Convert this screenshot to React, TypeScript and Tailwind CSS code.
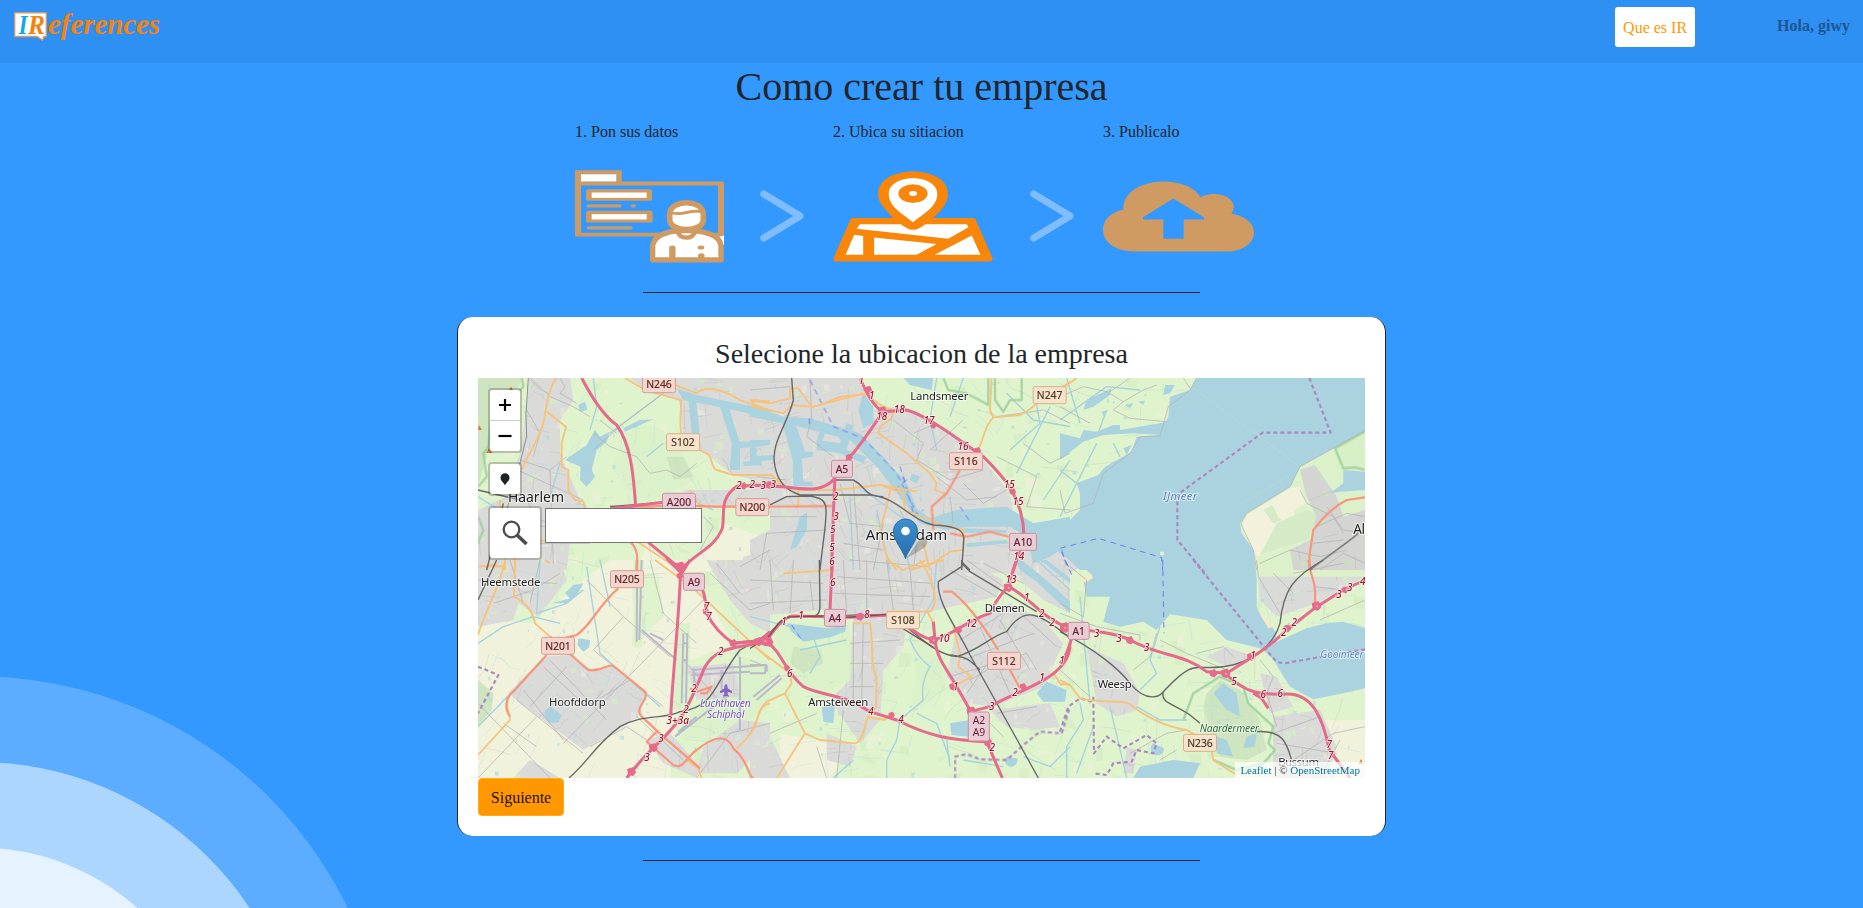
import React from "react";

type Origin = [number, number];

/* Every map sheet is drawn at three units per pixel from its own origin. */
const NW: Origin = [450, 310];
const N: Origin = [750, 310];
const NE: Origin = [1060, 310];
const SW: Origin = [450, 560];
const S: Origin = [750, 560];
const SE: Origin = [1060, 560];

type Line = [Origin, string];

const at = (o: Origin) => `translate(${o[0]} ${o[1]}) scale(0.33333)`;

const farmland: Line[] = [
  [SW, "M84,180 L250,190 400,60 480,0 560,0 545,260 640,170 620,0 700,0 690,40 770,110 850,250 700,310 660,654 84,654Z"],
  [NW, "M590,700 L680,770 800,700 820,640 960,690 960,730 870,780 560,790Z"],
  [S, "M0,560 L90,590 90,520 300,560 240,654 0,654Z"],
  [SE, "M700,480 L915,480 915,654 830,654Z"],
];

const green: Line[] = [
  [SW, "M690,190 L720,190 720,440 670,450Z"],
  [SW, "M550,0 L582,0 576,262 552,262Z"],
  [SW, "M870,290 L960,310 960,440 830,520 700,540 720,460Z"],
  [S, "M470,180 L550,260 600,380 530,430 480,460 500,340Z"],
  [S, "M60,190 L300,190 300,370 200,400 110,320Z"],
  [NW, "M480,470 L560,340 640,360 700,440 740,510 630,560 560,570Z"],
];

const woods: Line[] = [
  [NW, "M84,204 L215,204 198,250 140,310 120,370 115,420 90,510 84,520Z"],
  [SE, "M430,440 L440,400 480,360 540,390 600,480 620,570 560,600 480,590 460,540Z"],
  [SE, "M610,30 L700,0 740,60 650,160Z"],
  [S, "M130,260 L210,270 220,310 160,340 120,310Z"],
  [NW, "M650,440 L700,440 730,500 670,510Z"],
  [SW, "M84,360 L130,400 125,450 84,500Z"],
];

const urban: Line[] = [
  [NW, "M235,204 L360,204 370,270 330,330 330,430 360,500 395,580 470,640 460,700 360,700 350,780 84,780 84,600 170,560 210,430 228,300Z"],
  [NW, "M540,204 L960,204 960,520 850,495 780,440 700,390 690,270 600,250Z"],
  [NW, "M700,540 L960,540 960,590 760,590Z"],
  [NW, "M880,740 L960,720 960,780 870,780Z"],
  [SW, "M84,0 L330,0 350,60 265,170 205,130 190,180 84,200Z"],
  [SW, "M175,400 L280,290 360,285 430,332 490,316 590,405 565,470 510,505 400,570 240,450Z"],
  [SW, "M770,0 L960,0 960,220 900,190 840,120Z"],
  [SW, "M590,540 L660,520 750,620 740,654 640,610Z"],
  [SW, "M760,560 L870,480 960,490 960,540 860,640 740,640Z"],
  [SW, "M190,654 L240,600 330,654Z"],
  [SW, "M710,320 L850,310 870,410 740,420Z"],
  [N, "M0,204 L330,204 370,300 440,290 530,330 640,400 700,450 780,550 800,680 780,780 0,780 0,690 60,660 60,600 0,560Z"],
  [S, "M0,0 L650,0 760,60 740,110 560,150 480,180 550,190 400,180 220,150 0,170Z"],
  [S, "M620,200 L780,130 880,180 940,250 880,380 730,440 650,430 590,350Z"],
  [S, "M310,160 L470,190 460,260 400,330 390,480 330,550 240,420 300,360Z"],
  [S, "M0,580 L70,550 120,654 0,654Z"],
  [S, "M230,520 L320,560 300,620 230,600Z"],
  [S, "M720,450 L900,430 930,500 850,510 770,500Z"],
  [S, "M750,10 L960,0 960,160 880,120Z"],
  [N, "M640,660 L900,690 1010,760 960,790 640,790Z"],
  [SE, "M80,260 L190,310 240,400 230,450 170,470 110,430Z"],
  [SE, "M640,470 L780,450 830,560 800,654 640,654Z"],
  [SE, "M590,10 L700,0 915,0 915,50 770,130 650,170 600,120Z"],
  [SE, "M440,290 L500,260 580,290 500,320Z"],
  [SE, "M600,340 L650,350 700,440 630,460Z"],
  [SE, "M200,560 L230,570 220,640 190,640Z"],
];

const water: Line[] = [
  [NW, "M345,450 L410,405 435,360 450,380 480,365 470,395 440,420 425,480 435,500 410,530 390,510 392,470Z"],
  [NW, "M385,285 L405,275 412,300 390,305Z"],
  [NW, "M680,235 L740,255 960,300 960,325 840,298 700,270Z"],
  [NW, "M715,265 L738,270 750,375 725,370Z"],
  [NW, "M810,290 L838,296 868,395 930,393 935,408 870,415 870,480 840,480 845,400Z"],
  [NW, "M880,455 L935,452 935,466 880,468Z"],
  [NW, "M520,355 L570,330 610,328 570,345 525,365Z"],
  [N, "M0,285 L100,320 180,325 330,370 400,440 470,520 500,595 540,625 620,600 770,590 850,640 960,620 960,700 900,740 850,760 840,720 860,700 780,650 650,650 590,660 510,640 450,560 380,470 300,390 150,350 0,320Z"],
  [N, "M95,330 L140,350 165,425 190,425 188,440 155,445 160,515 188,515 188,528 130,528 128,450Z"],
  [N, "M200,390 L270,400 290,340 310,345 290,420 350,440 340,460 270,430 200,420Z M215,345 L232,348 215,400 200,398Z M250,350 L262,352 290,400 282,410Z"],
  [N, "M340,250 L370,290 370,340 340,355 325,300Z"],
  [N, "M0,390 L60,390 60,405 0,410Z M0,440 L70,435 70,450 0,455Z M0,412 L20,412 20,440 0,440Z"],
  [N, "M485,490 L510,500 500,520 480,510Z M640,655 L770,660 770,668 640,668Z M650,700 L770,690 775,700 650,712Z"],
  [N, "M460,204 L550,204 545,240 480,225Z"],
  [N, "M150,620 L172,605 170,660 140,710 120,720 135,670Z"],
  [NE, "M410,204 L915,204 915,780 60,780 -40,690 -60,660 20,640 60,600 60,550 50,520 115,495 135,470 215,425 230,380 300,375 325,320 330,260 390,240Z"],
  [NE, "M0,370 L60,385 70,360 110,365 160,345 180,345 180,360 300,340 320,335 300,375 220,370 130,375 70,395 0,450Z"],
  [NE, "M80,270 L155,235 150,255 100,290 70,300Z M195,285 L220,280 210,295Z M315,225 L345,225 330,250 310,255Z"],
  [NE, "M125,305 L145,300 130,318Z M235,275 L255,272 250,285Z M190,415 L215,405 200,435Z"],
  [S, "M110,190 L230,205 290,195 285,215 240,232 160,245 125,215Z"],
  [S, "M600,490 L660,480 655,530 605,525Z"],
  [S, "M215,440 L255,435 250,490 220,485Z"],
  [S, "M860,400 L890,365 950,390 945,425 880,425Z"],
  [S, "M770,590 A18,18 0 1 0 800,595Z"],
  [S, "M795,0 L815,0 900,70 960,125 960,160 860,65 810,30Z M870,0 L890,0 960,55 960,70Z"],
  [SE, "M60,-10 L590,-10 590,140 650,220 640,290 600,265 500,240 440,180 330,163 290,210 250,185 180,200 130,185 150,110 80,110 70,60 95,45 40,-10Z"],
  [SE, "M640,250 L740,205 800,190 850,185 915,205 915,385 850,400 760,418 690,380 640,300 610,270Z"],
  [SE, "M460,400 L490,370 530,400 540,470 500,450Z M560,530 L590,520 585,560 550,565Z M470,530 L500,540 520,590 470,580Z"],
  [SE, "M280,550 A20,20 0 1 0 312,565Z M240,620 L340,600 420,610 400,654 220,654Z"],
  [SW, "M285,450 L300,440 335,465 325,488 300,488 284,470Z M385,235 L420,240 418,262 400,275 382,255Z"],
  [SW, "M305,130 L360,115 345,100 370,75 400,70 385,100 350,130Z"],
];

const polder: Line[] = [
  [NE, "M915,362 L720,470 690,530 560,610 540,640 545,670 580,720 590,800 915,800Z"],
];

const polderFields: Line[] = [
  [NE, "M690,535 L560,615 545,650 590,740 740,690 700,600 740,580 720,530Z"],
];

const polderTown: Line[] = [
  [NE, "M720,480 L765,465 830,560 850,620 915,600 915,780 700,780 690,720 750,690 770,620 740,560Z"],
];

const nature: Line[] = [
  [NE, "M915,365 L825,415 850,475 880,470 915,480Z"],
];

const minor: Line[] = [
  [NW, "M240,204 L300,260 370,290 420,320 M330,204 L345,230 330,250 380,280 M430,370 L480,410 560,440 600,490 650,480 690,500 740,460"],
  [NW, "M210,450 L300,480 350,440 M180,470 L290,520 400,570 M230,560 L250,620 340,660 M120,640 L300,650 430,690 M300,480 L310,760 M230,300 L270,370 250,440 M150,700 L420,700"],
  [NW, "M450,330 L500,370 M430,420 L520,340 640,250 M760,620 L790,650 750,720 M870,770 L960,720"],
  [SW, "M84,60 L320,70 M130,130 L250,90 330,40 M180,0 L220,130 M270,0 L240,130 M84,654 L260,470 M84,430 L300,654 M160,490 L260,560 M200,420 L400,580 M280,320 L410,440 540,360 M220,390 L340,540 M300,300 L470,480 M350,320 L240,440"],
  [SW, "M770,110 L340,550 M430,270 L640,440 M520,170 L660,290 M410,60 L520,170 430,270 M600,0 L640,160 740,250 M460,390 L430,430 M780,40 L900,150 960,130 M800,10 L870,100 M700,300 L850,470 M420,560 L530,500 590,540 M560,470 L700,600 M740,654 L840,520 960,490"],
  [N, "M0,240 L120,230 M180,204 L185,330 170,380 250,440 M20,500 L110,510 M60,620 L200,620 M30,780 L50,670 230,660 M270,520 L300,640 400,650 M280,700 L400,720 M310,520 L330,780 M400,640 L370,780 M450,600 L500,700 490,780"],
  [N, "M430,330 L520,400 500,450 600,510 700,480 M540,420 L640,330 M560,500 L650,570 740,560 M600,560 L610,640 M490,370 L560,340 M640,520 L700,580 770,540 M820,400 L900,460 960,430 M740,440 L860,500 830,590 960,600 M740,320 L880,300 960,340"],
  [S, "M0,60 L220,70 M0,130 L230,120 M60,0 L70,150 M130,0 L120,160 M180,60 L190,150 M260,50 L400,60 550,70 M280,0 L290,160 M350,0 L350,160 M410,0 L430,150 M480,20 L490,150 M250,100 L540,110 M300,0 L540,20 M310,190 L310,440 M340,190 L335,420 M300,250 L450,240 M300,310 L400,310 M300,380 L370,380"],
  [S, "M630,240 L760,160 M640,300 L850,220 M660,360 L780,290 M600,350 L830,280 860,330 M650,400 L720,300 M690,200 L780,400 M750,180 L840,330 M800,150 L920,260 M820,70 L700,10 M600,30 L740,110 M650,0 L760,80 M200,560 L230,654 M0,300 L50,320 M60,520 L200,460 M280,450 L260,654 M700,470 L760,530 M740,460 L860,440"],
  [NE, "M0,260 L70,230 140,245 190,275 250,240 290,225 M150,245 L210,204 M0,290 L90,340 M190,275 L160,300 210,325 320,335 M0,540 L15,610 100,580 130,490 210,430 240,380 300,378 325,290 390,240 410,204 M370,204 L390,235"],
  [NE, "M915,362 L720,470 690,530 560,610 542,640 580,720 590,780 M720,540 L740,580 820,620 850,670 M600,760 L690,720 780,740 860,720 M770,650 L860,610 915,620 M760,700 L850,690 M780,780 L850,730 915,760 M800,590 L850,660 915,670"],
  [SE, "M0,130 L70,170 80,60 30,20 M0,160 L110,200 240,225 240,240 M290,220 L270,290 220,330 M300,240 L380,280 500,330 M410,280 L490,260 520,290 M590,0 L595,50 660,160 M700,40 L850,10 M760,80 L850,90 M640,40 L700,100 M780,180 L915,120 M600,300 L640,350 620,400 650,500 M640,520 L780,470 M700,600 L820,520 915,500 M650,550 L830,580 M780,654 L840,540 M0,330 L90,410 M210,580 L320,520 380,510 M300,600 L350,570"],
];

const dike: Line[] = [
  [NW, "M235,204 L228,310 230,380 205,480 170,600 130,700"],
];

const ditches: Line[] = [
  [NW, "M430,204 L440,290 420,360 M400,580 L410,640 M480,370 L560,310 640,250 M300,560 L330,460 M84,560 L180,620 M590,440 L640,400 M700,560 L790,600"],
  [SW, "M270,0 L260,160 350,130 400,90 M410,20 L450,280 630,440 M450,0 L480,140 M84,250 L160,200 250,170 330,190 M280,300 L84,500"],
  [S, "M560,0 L550,120 480,240 Q500,290 540,320 Q510,370 520,420 L450,480 440,540 410,600 410,654 M600,620 L590,540 M250,654 L310,600 M150,270 L290,240 M180,340 L210,290 190,230 M640,600 L760,620 M0,170 L120,200"],
  [S, "M960,560 L900,620 820,590 M500,460 L560,490 600,600 M860,0 L960,90"],
  [SE, "M60,110 L90,430 M240,390 L290,340 270,300 300,200 M60,430 L70,480 20,560 20,654 M230,440 L300,480 380,480 M100,500 L50,640 M150,440 L200,654"],
  [N, "M560,204 L540,330 560,420 M850,230 L870,340 780,420 M640,204 L600,320 M900,290 L800,490 M960,450 L880,570 M300,560 L310,780 M380,600 L420,780 M340,540 L480,640 M450,640 L480,780 M770,250 L850,330 960,350"],
  [NE, "M0,620 L80,460 110,400 M20,204 L60,340 M110,380 L140,300 M0,330 L140,230 240,240 M120,570 L70,680 M0,480 L100,560 M160,400 L180,440"],
];

const secondary: Line[] = [
  [NW, "M320,204 C295,230 290,290 285,310 C280,370 240,420 215,480 M290,305 L348,350 335,400 335,470 355,480 355,540 375,570 400,575 410,600 M150,570 L150,640 120,740 M84,770 L130,765 165,770 M270,692 L350,690 M195,745 L195,780 M165,745 L165,780"],
  [NW, "M525,204 L560,225 C600,250 640,255 690,270 C700,300 680,330 700,400 L770,430 C790,440 780,470 800,480 L850,495 960,495 M650,215 L740,250 C770,220 830,245 870,270 L960,300 M905,270 L910,290 960,300 M720,540 L750,590 860,590 M540,680 L690,780 M910,270 L960,275"],
  [SW, "M165,0 C155,70 110,140 84,225 M195,0 L192,110 C230,130 250,160 255,190 L300,230 M100,20 L160,20 M285,0 L300,10 M180,400 C160,440 180,460 180,480 L84,585 M615,0 L730,85 960,300 M960,430 C910,440 940,500 860,565 M710,600 L745,625 755,654"],
  [N, "M0,270 L60,280 120,265 120,235 145,235 185,290 C230,290 240,250 350,255 L400,290 430,300 425,325 390,350 385,370 470,430 540,490 560,520 555,540 590,552 M10,270 L10,290 100,310 125,285 180,290 M190,290 L340,250"],
  [N, "M0,495 L65,495 100,530 145,540 255,540 390,525 500,545 M145,540 L145,590 M725,204 L720,300 730,322 C700,350 700,400 680,425 M730,322 L810,315 C850,300 850,280 880,270 L960,215 M420,540 C410,600 395,640 390,660 L410,740 440,780 M390,525 L460,550 465,600 560,640 640,660 640,720 600,725 540,765 M520,700 L540,780"],
  [S, "M100,40 L250,30 240,0 M310,190 L360,190 C370,230 360,330 380,350 L378,440 350,480 C340,520 330,550 315,550 L210,540 165,520 80,654 M165,520 L105,400 M0,525 C30,480 20,450 50,425 L105,400 125,370 M0,250 L120,340 125,370 M410,155 L540,155 C570,130 550,60 510,0 M610,200 L630,280 625,320 665,350 610,380 M350,470 L405,480 420,460 M480,30 L580,0 M410,0 L460,30 530,0 M530,150 L550,190 M910,340 L930,370 960,375"],
  [SE, "M0,360 L30,375 60,415 C120,430 170,420 205,430 C270,480 320,500 380,510 L450,550 460,600 530,645 M0,375 L20,370"],
  [NE, "M0,240 L50,204"],
];

const primary: Line[] = [
  [NW, "M480,590 L600,590 680,585 790,590 960,590 M540,695 C570,720 560,760 560,780"],
  [SW, "M560,0 L560,30 M505,85 C450,130 420,200 380,225 L300,245 M300,230 L415,330 C460,335 470,310 490,318 L585,395 C600,420 550,440 575,470 L640,530 750,625 M290,285 L190,395 C170,410 160,440 180,470 M620,515 L590,545 670,615 C700,630 710,590 740,570 C790,530 830,520 850,565 C880,590 890,620 905,654 M720,385 L740,395 785,380 770,400 750,400"],
  [N, "M0,590 L250,588 M630,480 L590,550 545,590 550,660 M600,670 L650,680 720,665 775,680"],
  [S, "M580,95 L605,95 C640,120 680,170 720,230 L745,270 M780,330 L810,385 M0,648 L10,654"],
  [NE, "M915,562 L860,570 C820,590 790,620 760,660 L748,740 750,780"],
  [SE, "M745,0 C750,50 770,60 765,130"],
];

const motorway: Line[] = [
  [NW, "M395,204 Q450,310 500,345 C540,400 550,480 557,590 M480,597 L640,577 M960,525 L862,528 C800,570 830,620 815,660 C790,715 750,720 690,780 M595,697 L690,775"],
  [SW, "M650,-5 L695,40 720,0 M692,35 C685,200 668,350 662,470 M735,50 C775,100 765,150 770,160 C790,200 820,230 850,250 L960,240 M960,215 L920,250 C860,265 800,260 765,320 C740,380 720,430 700,460 C650,540 600,560 530,654"],
  [N, "M330,204 C350,250 370,290 400,305 L470,300 C540,320 640,400 700,440 C760,500 820,560 822,680 L790,780 M400,305 C360,360 330,410 295,445 L255,500 C250,600 247,700 245,780 M255,505 C220,545 180,540 100,530 L0,525"],
  [S, "M247,0 L240,150 M-50,250 L50,240 C80,200 100,170 130,168 L300,172 420,165 C470,190 500,230 550,240 M550,185 L555,240 C560,300 600,340 620,380 L660,450 M550,240 C620,220 650,180 720,160 C740,110 770,90 775,75 L800,0 M775,80 C840,110 880,180 960,205 M45,240 C100,280 100,330 160,380 C220,410 280,400 360,455 L440,480 C540,530 600,540 710,545 L757,654 M660,455 L720,440 C800,390 950,360 960,260"],
  [SE, "M0,205 C100,210 170,220 210,240 C300,290 370,280 440,335 L500,340 C560,300 620,270 680,210 L770,140 850,90 915,60 M500,345 C560,400 600,405 680,402 C760,400 790,480 808,570 L870,654 M580,400 L605,415 625,445 M0,310 C20,290 30,260 40,210"],
];

const junctions: [Origin, number, number, number][] = [
  [SW, 692, 20, 14], [SW, 690, 48, 9], [SW, 850, 250, 11], [SW, 925, 245, 12], [SW, 610, 563, 12], [SW, 545, 635, 12], [SW, 955, 245, 14], [SW, 768, 155, 9],
  [N, 398, 303, 13], [N, 355, 240, 11], [N, 550, 347, 8], [N, 298, 442, 9], [N, 683, 422, 9], [N, 788, 545, 9], [N, 60, 525, 10],
  [S, 550, 240, 13], [S, 775, 82, 13], [S, 45, 243, 15], [S, 610, 380, 11], [S, 330, 170, 11], [S, 665, 455, 14], [S, 820, 380, 9], [S, 715, 548, 12], [S, 112, 325, 8], [S, 625, 210, 10], [S, 425, 465, 8], [S, 945, 200, 12],
  [SE, 770, 138, 13], [SE, 855, 90, 9], [SE, 682, 205, 10], [SE, 210, 241, 11], [SE, 460, 340, 11], [SE, 497, 340, 13], [SE, 573, 290, 11], [SE, 610, 405, 8], [SE, 15, 203, 14],
  [NW, 880, 528, 10], [NW, 955, 525, 10], [NW, 690, 772, 12],
];

const rail: Line[] = [
  [SW, "M140,0 L84,120 M357,654 C420,600 430,560 510,500 C580,460 640,480 690,455 C800,440 790,370 870,270 L960,220"],
  [NW, "M84,540 L210,570 M480,590 L700,572 M160,580 L110,780"],
  [N, "M125,204 L130,270 C110,350 60,400 75,470 C85,520 110,540 150,555 L360,555 C440,560 480,630 550,645 C660,650 640,680 640,710 L635,780 M255,510 L310,510 C350,530 340,560 400,560 M60,585 L110,560 180,558 C250,570 230,590 210,780 M635,755 L660,780"],
  [S, "M208,0 L210,140 C208,165 200,167 190,168 L130,170 M0,265 C80,220 80,170 130,170 L410,163 C500,210 540,280 620,290 C690,270 720,230 770,215 C820,140 860,150 960,235 M635,0 L635,20 565,65 C560,130 620,200 660,285 L865,654 M635,10 L660,35 860,155 M600,285 C650,290 660,300 690,330"],
  [SE, "M0,215 C110,270 180,330 210,370 C260,430 300,410 310,395 C380,320 400,320 430,322 C560,330 640,260 660,190 C670,90 700,50 790,0 M310,395 C300,430 340,430 390,465 L420,490 M590,515 C670,510 680,550 695,600"],
  [NE, "M750,780 C800,740 860,700 895,670"],
];

const runways: Line[] = [
  [SW, "M575,0 L568,240 M562,0 L560,245 M575,210 L680,300 M600,220 L640,240 M700,220 L695,430 M712,220 L708,430 M700,250 L712,250 M698,300 L710,300 M725,330 L950,315 M725,345 L900,335 M870,290 L870,510 M675,530 L830,410 M685,515 L740,470 M730,325 L735,380 M950,315 L950,335 M815,330 L815,400"],
  [S, "M0,315 L48,315 45,340 0,340 M10,410 L90,345 M20,420 L95,355"],
];

const borders: Line[] = [
  [NE, "M748,204 L812,368 608,368 365,545 352,560 352,690 440,795"],
  [SE, "M400,0 L620,270 C650,310 660,315 700,305 L915,268"],
  [SE, "M100,410 L102,580 140,530 190,565 260,525 290,550 280,580 230,570 215,605 160,610 140,645 100,640 M0,515 L25,440 60,415 100,425"],
  [S, "M615,654 L615,590 650,582 690,598 770,600 820,555 870,515 935,520 960,440"],
  [SW, "M84,320 L145,345 84,460"],
];

const ferries: Line[] = [
  [N, "M180,210 L250,350 340,385 440,490 500,610 M178,325 L178,350 M450,470 L465,520 M435,540 L480,500 M460,500 L490,610 M630,590 L660,635 M490,620 L520,600 M935,720 L950,770"],
  [NE, "M25,770 L0,715 115,685 305,743 308,780"],
  [SE, "M308,0 L312,220 M15,0 L40,55"],
  [S, "M125,195 L155,240"],
];

const hedges: Line[] = [
  [N, "M580,204 L595,240 650,250 715,285 715,204 M735,204 L735,270 760,305 780,270 815,270 815,204"],
  [NE, "M915,365 L825,415 850,475 885,472 915,480"],
  [SE, "M370,480 L400,400 480,350 550,380 565,430 640,500 625,550 645,570 610,610 530,630 460,600"],
  [NW, "M215,204 L220,230 180,270 125,330 115,410 100,430 110,500 84,530 M84,620 L100,660 84,700"],
];

const shieldTone = {
  a: "fill-[#e9cdd5] stroke-[#cf8ba0]",
  n: "fill-[#f2d6cf] stroke-[#d99d8c]",
  s: "fill-[#f5e3cf] stroke-[#d8b184]",
};
const shieldInk = {
  a: "fill-[#681c35] stroke-[#681c35]",
  n: "fill-[#66281e] stroke-[#66281e]",
  s: "fill-[#523a1c] stroke-[#523a1c]",
};

const shields: [Origin, number, number, string, "a" | "n" | "s"][] = [
  [NW, 627, 223, "N246", "n"], [NW, 699, 397, "S102", "s"], [NW, 687, 576, "A200", "a"], [NW, 907, 592, "N200", "n"],
  [SW, 531, 58, "N205", "n"], [SW, 732, 66, "A9", "a"], [SW, 324, 258, "N201", "n"],
  [N, 276, 477, "A5", "a"], [N, 648, 454, "S116", "n"], [N, 899, 256, "N247", "s"], [N, 819, 696, "A10", "a"],
  [S, 255, 174, "A4", "a"], [S, 459, 181, "S108", "s"], [S, 762, 303, "S112", "n"],
  [SE, 56, 213, "A1", "a"], [SE, 420, 549, "N236", "s"],
];

const places: [Origin, number, number, string, number, number][] = [
  [NW, 174, 577, "Haarlem", 168, 42], [SW, 93, 79, "Heemstede", 178, 34], [SW, 297, 438, "Hoofddorp", 170, 34],
  [N, 481, 270, "Landsmeer", 174, 34], [N, 347, 690, "Amsterdam", 245, 45],
  [S, 704, 155, "Diemen", 120, 34], [S, 175, 438, "Amstelveen", 180, 34],
  [SE, 113, 384, "Weesp", 102, 34], [SE, 655, 618, "Bussum", 122, 34], [NE, 880, 671, "Almere", 130, 41],
];

const exits: [Origin, number, number, string][] = [
  [NW, 867, 538, "2"], [NW, 907, 535, "2"], [NW, 940, 538, "3"],
  [SW, 770, 150, "7"], [SW, 777, 181, "7"], [SW, 812, 284, "2"], [SW, 732, 395, "2"], [SW, 708, 460, "2"], [SW, 683, 492, "3+3a"], [SW, 633, 545, "3"], [SW, 591, 602, "3"],
  [N, 70, 535, "3"], [N, 334, 223, "1"], [N, 365, 268, "1"], [N, 395, 329, "18"], [N, 448, 308, "18"], [N, 537, 343, "17"], [N, 639, 419, "16"], [N, 778, 535, "15"], [N, 804, 584, "15"], [N, 257, 569, "2"], [N, 258, 631, "3"], [N, 248, 670, "5"], [N, 246, 722, "5"], [N, 246, 764, "6"], [N, 806, 751, "14"],
  [S, 248, 79, "6"], [S, 153, 177, "1"], [S, 102, 194, "1"], [S, 350, 175, "8"], [S, 582, 246, "10"], [S, 664, 201, "12"], [S, 783, 68, "13"], [S, 830, 124, "1"], [S, 875, 171, "2"], [S, 907, 198, "2"], [S, 119, 350, "6"], [S, 363, 466, "4"], [S, 453, 489, "4"], [S, 617, 389, "1"], [S, 725, 449, "3"], [S, 795, 408, "2"], [S, 876, 362, "1"], [S, 936, 313, "1"], [S, 727, 572, "2"],
  [SE, 110, 230, "3"], [SE, 177, 246, "3"], [SE, 260, 273, "3"], [SE, 579, 298, "1"], [SE, 671, 227, "2"], [SE, 703, 197, "2"], [SE, 837, 114, "3"], [SE, 869, 93, "3"], [SE, 908, 76, "4"], [SE, 522, 376, "5"], [SE, 610, 414, "6"], [SE, 661, 411, "6"], [SE, 808, 563, "7"], [SE, 812, 597, "7"],
];

/* Small seeded generator so the street texture is stable between renders. */
function seeded(seed: number) {
  let s = seed;
  return () => {
    s = (s * 16807) % 2147483647;
    return s / 2147483647;
  };
}

function scatter(seed: number, count: number, min: number, max: number) {
  const r = seeded(seed);
  let d = "";
  for (let i = 0; i < count; i++) {
    const x = 478 + r() * 887;
    const y = 378 + r() * 400;
    const w = min + r() * (max - min);
    const h = min + r() * (max - min);
    const k = (r() - 0.5) * w;
    d += `M${x.toFixed(1)},${y.toFixed(1)}l${w.toFixed(1)},${(k * 0.6).toFixed(1)} ${(k * 0.5).toFixed(1)},${h.toFixed(1)} ${(-w).toFixed(1)},${(-k * 0.4).toFixed(1)}Z`;
  }
  return d;
}

/* Polylines that follow a slowly varying local grid direction. */
function strands(seed: number, count: number, len: number, wobble: number) {
  const r = seeded(seed);
  let d = "";
  for (let i = 0; i < count; i++) {
    let x = 478 + r() * 887;
    let y = 378 + r() * 400;
    const tilt = Math.sin(x / 70) * 0.4 + Math.cos(y / 55) * 0.35;
    let a = tilt + (r() > 0.5 ? 0 : Math.PI / 2);
    d += `M${x.toFixed(1)},${y.toFixed(1)}`;
    for (let j = 0; j < 3; j++) {
      x += Math.cos(a) * len * (0.4 + r());
      y += Math.sin(a) * len * (0.4 + r());
      a += (r() - 0.5) * wobble;
      d += `L${x.toFixed(1)},${y.toFixed(1)}`;
    }
  }
  return d;
}

function Layer({ items, className, width, dash }: { items: Line[]; className: string; width?: number; dash?: string }) {
  return (
    <g className={className} strokeWidth={width} strokeDasharray={dash} strokeLinejoin="round">
      {items.map(([o, d], i) => (
        <path key={i} d={d} transform={at(o)} />
      ))}
    </g>
  );
}

function CityMap() {
  return (
    <svg viewBox="478 378 887 400" className="block h-full w-full font-['Noto_Sans',sans-serif]">
      <defs>
        <clipPath id="town">
          {urban.map(([o, d], i) => (
            <path key={i} d={d} transform={at(o)} />
          ))}
        </clipPath>
        <clipPath id="newtown">
          {polderTown.map(([o, d], i) => (
            <path key={i} d={d} transform={at(o)} />
          ))}
        </clipPath>
        <linearGradient id="pin" x1="0" y1="0" x2="0" y2="1">
          <stop offset="0" stopColor="#3d8fd0" />
          <stop offset="1" stopColor="#256fae" />
        </linearGradient>
      </defs>
      <rect x="478" y="378" width="887" height="400" className="fill-[#dff3cc]" />
      <path d={scatter(77, 200, 3, 14)} className="fill-[#d8efc5]" />
      <path d={scatter(41, 150, 3, 12)} className="fill-[#e9f1d6]" />
      <Layer items={farmland} className="fill-[#f1f2dc]" />
      <Layer items={green} className="fill-[#daf1c9]" />
      <Layer items={woods} className="fill-[#cee5bf]" />
      <path d={strands(9, 520, 8, 0.25)} className="fill-none stroke-[#aed9df] opacity-60" strokeWidth="0.5" />
      <path d={scatter(19, 260, 1, 4)} className="fill-[#b3dadb] opacity-70" />
      <path d={strands(83, 90, 12, 0.3)} className="fill-none stroke-[#c6c3c4] opacity-70" strokeWidth="0.5" />
      <Layer items={urban} className="fill-[#dadad8]" />
      <g clipPath="url(#town)">
        <path d={scatter(31, 620, 2, 8)} className="fill-[#d6ebc8] opacity-70" />
        <path d={scatter(53, 240, 2, 8)} className="fill-[#ebe5e1] opacity-70" />
        <path d={scatter(15, 200, 1, 4)} className="fill-[#b4d7dc] opacity-70" />
        <path d={strands(47, 260, 7, 0.2)} className="fill-none stroke-[#b4d9e2]" strokeWidth="0.5" />
        <path d={strands(21, 720, 7, 0.2)} className="fill-none stroke-[#c0c0c0]" strokeWidth="0.5" />
      </g>
      <Layer items={ditches} className="fill-none stroke-[#a5d2df]" width={4} />
      <Layer items={water} className="fill-[#aad3df]" />
      <Layer items={polder} className="fill-[#dcf0c9]" />
      <Layer items={polderFields} className="fill-[#f2f1dc]" />
      <path transform={at(NE)} d="M610,600 L635,585 665,630 640,640Z M600,735 L740,690 770,650 780,620 740,600 650,640Z" className="fill-[#d5eac6]" />
      <path transform={at(NE)} d="M640,580 L710,540 735,580 655,625Z" className="fill-[#f2f1dc]" />
      <Layer items={polderTown} className="fill-[#d4d4d2]" />
      <g clipPath="url(#newtown)">
        <path d={scatter(61, 700, 2, 7)} className="fill-[#c9e4b6] opacity-70" />
        <path d={strands(29, 260, 8, 0.4)} className="fill-none stroke-[#bdbdbd]" strokeWidth="0.5" />
      </g>
      <path transform={at(NE)} d="M850,480 L915,485 915,540 840,545 810,550 850,520Z" className="fill-[#aad3df]" />
      <Layer items={nature} className="fill-[#d8f0c6]" />
      <path transform={at(NE)} d="M400,235 L720,470 M535,587 L700,490 M10,718 L62,712" className="fill-none stroke-[#bcd9cf]" strokeWidth="2" />
      <path transform={at(SE)} d="M60,55 L95,42 98,55 75,68Z M590,140 L640,200 625,205 598,160Z" className="fill-[#f5e9c6]" />
      <circle cx="1162" cy="553.500" r="2" className="fill-[#eeefcf]" />
      <Layer items={hedges} className="fill-none stroke-[#98cd98] opacity-80" width={7} />
      <Layer items={minor} className="fill-none stroke-[#b4b1b4]" width={2.2} />
      <Layer items={dike} className="fill-none stroke-[#909090]" width={3} />
      <Layer items={runways} className="fill-none stroke-[#bbb8cb]" width={6} />
      <Layer items={borders} className="fill-none stroke-[#ab88c0]" width={6.5} dash="12 9" />
      <Layer items={ferries} className="fill-none stroke-[#6f7bef]" width={3} dash="17 14" />
      <Layer items={secondary} className="fill-none stroke-[#f7c27c]" width={5.5} />
      <Layer items={primary} className="fill-none stroke-[#f9957a]" width={6.5} />
      <Layer items={rail} className="fill-none stroke-[#686868]" width={4.2} />
      <Layer items={motorway} className="fill-none stroke-[#e66a89]" width={9} />
      <path transform={at(S)} d="M45,245 C80,200 90,170 130,170 L220,168 M290,172 L410,163 C440,200 500,230 550,262" className="fill-none stroke-[#7c4a58]" strokeWidth="4" />
      {junctions.map(([o, x, y, r], i) => (
        <g key={i} transform={at(o)}>
          <path
            d={`M${x - r},${y - r * 0.6} L${x + r * 0.4},${y - r} ${x + r},${y + r * 0.2} ${x + r * 0.3},${y + r} ${x - r * 0.8},${y + r * 0.6}Z`}
            className="fill-[#e66a89] stroke-[#e66a89]"
            strokeWidth="3"
          />
          {r > 12 && <circle cx={x + 1} cy={y + 1} r="3" className="fill-[#f0b5c2]" />}
        </g>
      ))}
      <g className="fill-[#d0803f]">
        <path d="M508.500,391 L511,386.500 513.500,391Z M478,430 L479,425 482,430Z M486,453 L489,448 492.500,453Z M1358.500,764 L1361,759 1363.500,764Z" />
      </g>
      <path transform={at(SW)} d="M828,373 c4,0 5,6 5,12 l13,9 v5 l-13,-4 v8 l4,4 v3 l-9,-2 -9,2 v-3 l4,-4 v-8 l-13,4 v-5 l13,-9 c0,-6 1,-12 5,-12Z" className="fill-[#8461c4]" />

      {exits.map(([o, x, y, t], i) => (
        <text key={i} transform={at(o)} x={x} y={y} textAnchor="middle" fontSize="30" className="fill-[#94182a] font-medium italic stroke-[#fbeeea] [paint-order:stroke]" strokeWidth="4.500">
          {t}
        </text>
      ))}
      {shields.map(([o, x, y, t, k], i) => {
        const w = t.length === 4 ? 99 : t.length === 3 ? 81 : 63;
        return (
          <g key={i} transform={at(o)}>
            <rect x={x - w / 2} y={y - 26} width={w} height="51" rx="6" className={shieldTone[k]} strokeWidth="3" />
            <text x={x} y={y + 11} textAnchor="middle" fontSize="31" className={shieldInk[k]} strokeWidth="0.600">
              {t}
            </text>
          </g>
        );
      })}
      <g transform={at(S)} textAnchor="middle" fontSize="31" className="fill-[#681c35]">
        <rect x="655" y="456" width="63" height="87" rx="6" className="fill-[#e9cdd5] stroke-[#cf8ba0]" strokeWidth="3" />
        <text x="687" y="493">A2</text>
        <text x="687" y="528">A9</text>
      </g>
      {places.map(([o, x, y, t, w, s], i) => (
        <text key={i} transform={at(o)} x={x} y={y} textLength={w} fontSize={s} className="fill-[#202020] stroke-white/70 [paint-order:stroke]" strokeWidth="6">
          {t}
        </text>
      ))}
      <g className="stroke-white/70 italic [paint-order:stroke]" strokeWidth="5" fontSize="31" lengthAdjust="spacingAndGlyphs">
        <text transform={at(NE)} x="309" y="569" textLength="103" fontSize="34" className="fill-[#4f7fb5]">IJmeer</text>
        <text transform={at(SE)} x="781" y="293" textLength="130" className="fill-[#5b86bd]">Gooimeer</text>
        <text transform={at(SE)} x="419" y="516" textLength="178" className="fill-[#2a6a36]">Naardermeer</text>
        <text transform={at(SW)} x="750" y="440" textLength="152" className="fill-[#7350b8]">Luchthaven</text>
        <text transform={at(SW)} x="771" y="475" textLength="112" className="fill-[#7350b8]">Schiphol</text>
      </g>

      <path d="M906,559 L920,539 C927,534 930,543 924,548Z" className="fill-black/20 blur-[0.7px]" />
      <path d="M905.500,558.500 C903,550 893.500,541 893.500,531 A12,12 0 0 1 917.500,531 C917.500,541 908,550 905.500,558.500Z" fill="url(#pin)" stroke="#2b6ea6" strokeWidth="1" />
      <circle cx="905.500" cy="531" r="4.300" className="fill-white" />
    </svg>
  );
}

function Logo() {
  return (
    <svg viewBox="0 -12 160 52" className="h-[52px] w-[160px] font-['Liberation_Serif',serif]">
      <path d="M.7,.8 H32.300 V24.500 H30 L28.500,28.300 23,24.500 H.7Z" className="fill-white stroke-[#d89a60]" strokeWidth="1.300" />
      <text x="4.500" y="21.500" fontSize="28" textLength="9" lengthAdjust="spacingAndGlyphs" className="fill-[#12a8e8] font-bold italic">I</text>
      <text x="14" y="21.500" fontSize="28" textLength="17" lengthAdjust="spacingAndGlyphs" className="fill-[#f5820d] font-bold italic">R</text>
      <text x="34" y="21.500" fontSize="30" textLength="112" lengthAdjust="spacingAndGlyphs" className="fill-[#f5820d] font-bold italic">eferences</text>
    </svg>
  );
}

function ProfileIcon() {
  return (
    <svg viewBox="45 329 447 278" className="h-[93px] w-[149px]" strokeLinejoin="round">
      <path
        fillRule="evenodd"
        d="M48,329 H182 Q185,329 185,333 V363 H487 Q492,363 492,368 V528 H48 Q45,528 45,524 V333 Q45,329 48,329Z M63,375 V517 H474 V375Z M63,341 V363 H169 V341Z"
        className="fill-[#cf9b62]"
      />
      <path d="M63,341 H169 V363 H63Z" className="fill-white" />
      <g className="fill-[#cf9b62]">
        <rect x="78" y="386" width="198" height="35" rx="5" />
        <rect x="78" y="451" width="200" height="35" rx="5" />
      </g>
      <g className="fill-white">
        <rect x="95" y="396" width="165" height="16" />
        <rect x="95" y="461" width="165" height="16" />
      </g>
      <g className="fill-none stroke-[#cf9b62]" strokeWidth="10" strokeLinecap="round">
        <path d="M85,436 H180 M217,436 H223 M85,502 H213" />
      </g>
      <path d="M470,530 L492,525 V555Z" className="fill-white" />
      <path d="M278,598 V560 C278,530 305,518 345,512 H412 C455,518 483,530 483,560 V598Z" className="fill-white stroke-[#cf9b62]" strokeWidth="16" />
      <path d="M352,512 C360,538 397,538 406,512Z" className="fill-white stroke-[#cf9b62]" strokeWidth="13" />
      <path d="M329,462 C329,415 430,415 430,462 V476 C430,518 329,518 329,476Z" className="fill-white stroke-[#cf9b62]" strokeWidth="17" />
      <path d="M335,457 C365,466 380,449 424,453" className="fill-none stroke-[#cf9b62]" strokeWidth="9" />
      <path d="M337,600 V563" className="stroke-[#cf9b62]" strokeWidth="19" />
      <path d="M424,600 V585" className="stroke-[#cf9b62]" strokeWidth="19" />
      <ellipse cx="337" cy="561" rx="9.500" ry="6" className="fill-[#cf9b62]" />
      <ellipse cx="423" cy="561" rx="10" ry="6" className="fill-[#cf9b62]" />
      <ellipse cx="424" cy="584" rx="9.500" ry="6" className="fill-[#cf9b62]" />
    </svg>
  );
}

function PlaceIcon() {
  return (
    <svg viewBox="-201 331 480 274" className="h-[91px] w-[160px]" strokeLinejoin="round">
      <path d="M-142,481 H220 L270,595 H-192Z" className="fill-[#f7860a] stroke-[#f7860a]" strokeWidth="17" />
      <g className="fill-white">
        <path d="M-121,491 H201 L206,500 145,535 -131,505Z" />
        <path d="M-138,523 L-111,527 V583 H-164Z" />
        <path d="M-78,531 L110,551 50,583 H-78Z" />
        <path d="M216,525 L242,583 H104Z" />
      </g>
      <path d="M39,508 C20,508 10,495 -20,473 C-50,440 -66,425 -66,400 C-66,310 144,310 144,400 C144,425 130,445 98,473 C70,495 58,508 39,508Z" className="fill-[#f7860a]" />
      <path d="M39,485 C10,460 -34,440 -34,400 C-34,337 112,337 112,400 C112,440 68,460 39,485Z" className="fill-white" />
      <ellipse cx="39" cy="399" rx="44" ry="28" className="fill-[#f7860a]" />
      <ellipse cx="39" cy="399" rx="12" ry="7.500" className="fill-white" />
    </svg>
  );
}

function CloudIcon() {
  return (
    <svg viewBox="609 362 453 212" className="h-[71px] w-[151px]">
      <path
        fillRule="evenodd"
        d="M705,573 C645,573 609,545 609,508 C609,478 632,455 670,447 C668,395 725,363 792,363 C842,363 885,382 901,410 C945,388 1001,408 1001,438 C1001,447 998,454 994,460 C1032,465 1062,488 1062,516 C1062,550 1025,573 980,573Z M820,414 L729,470 V477 H790 V535 H851 V477 H912 V470Z"
        className="fill-[#cf9b62]"
      />
    </svg>
  );
}

function Chevron() {
  return (
    <svg viewBox="0 0 46 52" className="mt-[70px] h-[52px] w-[46px] shrink-0">
      <path d="M3.800,4 L40,26 3.800,48" className="fill-none stroke-[#80bdff]" strokeWidth="7" strokeLinecap="round" strokeLinejoin="round" />
    </svg>
  );
}

function Rings() {
  return (
    <svg viewBox="0 0 380 248" className="absolute bottom-0 left-0 h-[248px] w-[380px]">
      <circle cx="-21.700" cy="427" r="410.500" className="fill-[#5cadff]" />
      <circle cx="-21.700" cy="427" r="325" className="fill-[#add6ff]" />
      <circle cx="-21.700" cy="427" r="239.500" className="fill-[#e5f2ff]" />
    </svg>
  );
}

const control = "rounded-[4px] border-2 border-black/20 bg-white bg-clip-padding";

export default function App() {
  return (
    <div className="relative h-[908px] w-full overflow-hidden bg-[#3399ff] font-['Liberation_Serif',serif] text-base text-[#212529]">
      <Rings />
      <nav className="relative flex h-[63px] items-start justify-between bg-[#2f90f3] pl-[14px] pr-[13px]">
        <Logo />
        <div className="flex items-start">
          <button className="mt-[7px] h-10 w-20 rounded-[3px] bg-white pt-px text-center text-[#ff9900]">Que es IR</button>
          <span className="ml-[82px] mt-[14px] font-bold text-[#1c5791]">Hola, giwy</span>
        </div>
      </nav>

      <main className="relative ml-[457px] flex w-[929px] flex-col">
        <h1 className="h-[48px] text-center text-[40px] leading-[48px]">Como crear tu empresa</h1>
        <div className="mt-[9px] flex h-[172px] items-start pl-[118px]">
          <div className="w-[185px] shrink-0">
            <p className="mb-[26px]">1. Pon sus datos</p>
            <ProfileIcon />
          </div>
          <Chevron />
          <div className="ml-[27px] w-[197px] shrink-0">
            <p className="mb-[26.500px]">2. Ubica su sitiacion</p>
            <PlaceIcon />
          </div>
          <Chevron />
          <div className="ml-[27px] shrink-0">
            <p className="mb-[37px]">3. Publicalo</p>
            <CloudIcon />
          </div>
        </div>
        <div className="h-px w-[557px] self-center bg-[#212529]" />

        <section className="mt-6 h-[519px] rounded-[15px] border-x border-[#212529] bg-white px-5 pt-[20px]">
          <h2 className="h-[41px] text-center text-[28px] leading-[34px]">Selecione la ubicacion de la empresa</h2>
          <div className="relative h-[400px] w-[887px] overflow-hidden">
            <CityMap />
            <div className={`absolute left-[10px] top-[10px] flex w-[34px] flex-col ${control}`}>
              <button className="flex h-[31px] items-center justify-center border-b border-[#ccc]">
                <svg viewBox="0 0 14 14" className="h-[14px] w-[14px] stroke-black" strokeWidth="2.200">
                  <path d="M1,7 H13 M7,1 V13" />
                </svg>
              </button>
              <button className="flex h-[30px] items-center justify-center">
                <svg viewBox="0 0 14 14" className="h-[14px] w-[14px] stroke-black" strokeWidth="2.200">
                  <path d="M0.500,7 H13.500" />
                </svg>
              </button>
            </div>
            <button className={`absolute left-[10px] top-[84px] flex h-[34px] w-[34px] items-center justify-center ${control}`}>
              <svg viewBox="0 0 10 13" className="h-[13px] w-[10px]">
                <path d="M5,12.500 C4,9.500 .5,8 .5,4.700 A4.500,4.500 0 0 1 9.500,4.700 C9.500,8 6,9.500 5,12.500Z" className="fill-[#1f2226]" />
              </svg>
            </button>
            <button className={`absolute left-[10px] top-[128px] flex h-[54px] w-[54px] items-center justify-center ${control}`}>
              <svg viewBox="0 0 26 26" className="h-[26px] w-[26px] fill-none stroke-[#4b4b4b]">
                <circle cx="9.500" cy="9.500" r="7.800" strokeWidth="2.300" />
                <path d="M15,15 L24.500,24" strokeWidth="3.600" />
              </svg>
            </button>
            <input aria-label="Buscar" className="absolute left-[67px] top-[130px] h-[35px] w-[157px] border border-[#767676] bg-white px-1 outline-none" />
            <div className="absolute bottom-0 right-0 h-4 bg-white/70 px-[5px] text-[11px] leading-[17px] text-[#333]">
              <a className="text-[#0078a8]">Leaflet</a> | © <a className="text-[#0078a8]">OpenStreetMap</a>
            </div>
          </div>
          <button className="block h-[38px] w-[86px] rounded-[4px] border border-[#ffae0d] bg-[#ff9800] pt-px text-center text-black/90">Siguiente</button>
        </section>
        <div className="mt-6 h-px w-[557px] self-center bg-[#212529]" />
      </main>
    </div>
  );
}
